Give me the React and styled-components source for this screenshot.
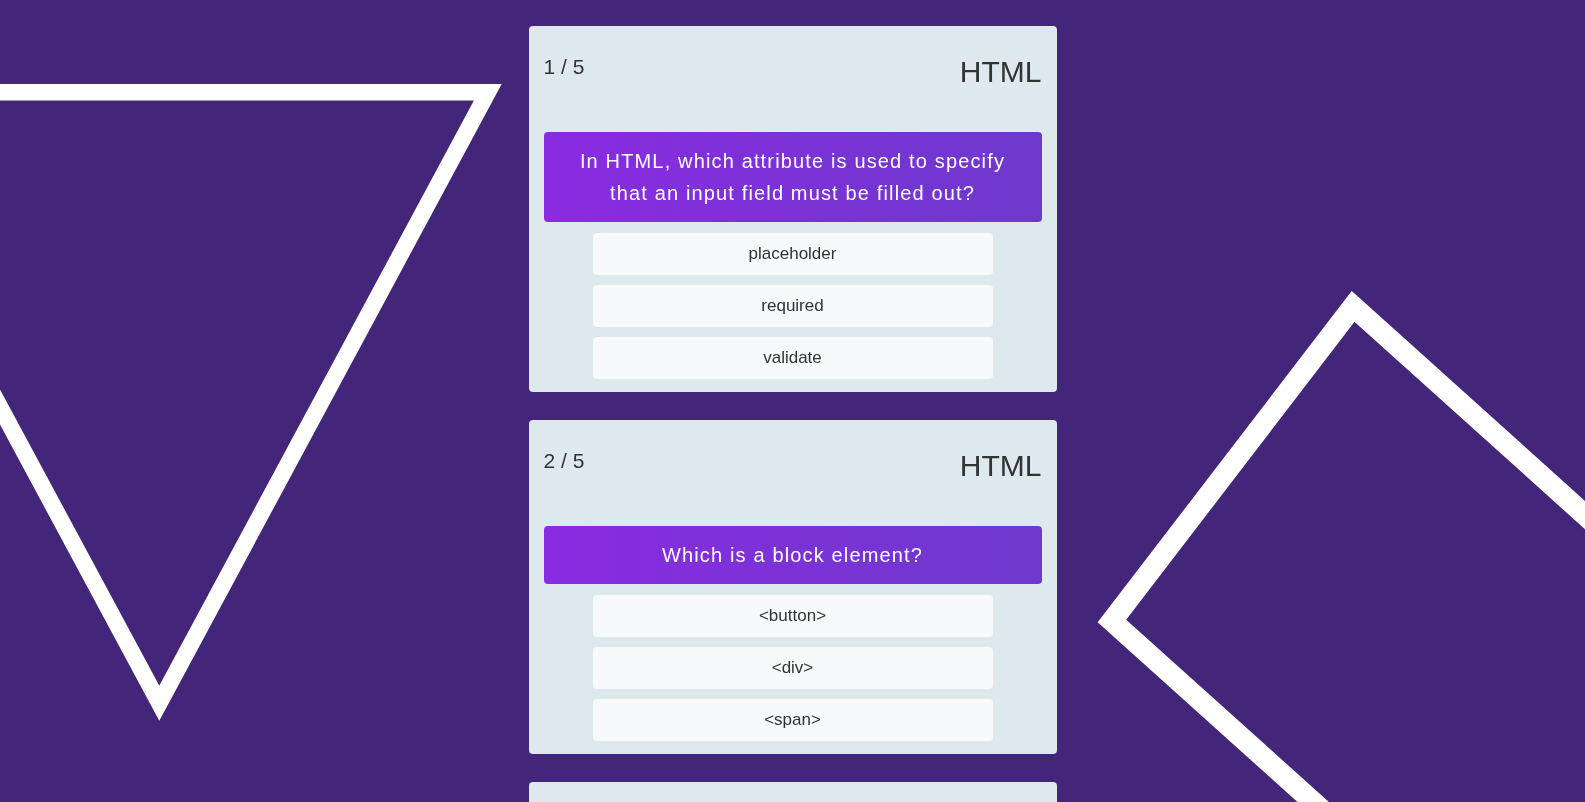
import React from "react";
import styled, { createGlobalStyle } from "styled-components";

const GlobalStyle = createGlobalStyle`
  html {
    scrollbar-width: none;
  }
  html::-webkit-scrollbar {
    display: none;
  }
  body {
    margin: 0;
    background: #43267a;
    font-family: "Liberation Sans", Arial, sans-serif;
    color: #333;
  }
`;

const Backdrop = styled.div`
  position: fixed;
  top: 0;
  left: 0;
  width: 1585px;
  height: 802px;
  overflow: hidden;
  pointer-events: none;
  z-index: 0;
`;

const Quiz = styled.main`
  position: relative;
  z-index: 1;
  display: flex;
  flex-direction: column;
  align-items: center;
  gap: 28px;
  padding: 26px 0 40px;
`;

const Card = styled.section`
  box-sizing: border-box;
  width: 528px;
  padding: 15px 15px 13px;
  background: #dde9ed;
  border-radius: 4px;
`;

const Header = styled.header`
  box-sizing: border-box;
  height: 91px;
  padding-top: 13px;
  display: flex;
  justify-content: space-between;
  align-items: flex-start;
`;

const Counter = styled.span`
  margin-top: 1px;
  font-size: 21px;
  line-height: 24px;
  color: #333;
`;

const Topic = styled.h2`
  margin: 1px 0 0;
  font-size: 30px;
  line-height: 34px;
  font-weight: 400;
  color: #333;
`;

const Question = styled.div`
  padding: 13px 20px;
  border-radius: 4px;
  background: linear-gradient(to right, #8a2be2, #6d39cb);
  color: #fff;
  font-size: 20px;
  line-height: 32px;
  letter-spacing: 1.15px;
  text-align: center;
`;

const Answers = styled.div`
  display: flex;
  flex-direction: column;
  align-items: center;
  gap: 10px;
  margin-top: 11px;
`;

const Answer = styled.button`
  width: 400px;
  height: 42px;
  border: none;
  border-radius: 4px;
  background: #f7f9fa;
  color: #333;
  font-family: inherit;
  font-size: 17px;
  cursor: pointer;
`;

const questions = [
  {
    text: "In HTML, which attribute is used to specify that an input field must be filled out?",
    answers: ["placeholder", "required", "validate"],
  },
  {
    text: "Which is a block element?",
    answers: ["<button>", "<div>", "<span>"],
  },
  {
    text: "Which tag is used to create a hyperlink?",
    answers: ["<link>", "<a>", "<href>"],
  },
  {
    text: "Which element holds the metadata of a page?",
    answers: ["<head>", "<meta>", "<body>"],
  },
  {
    text: "Which tag defines a table row?",
    answers: ["<td>", "<th>", "<tr>"],
  },
];

function Shapes() {
  return (
    <Backdrop>
      <svg width="1585" height="802" viewBox="0 0 1585 802">
        <polygon
          points="-169.2,92.3 487.8,92.3 159.3,703.2"
          fill="none"
          stroke="#fff"
          strokeWidth="16.6"
          strokeLinejoin="miter"
        />
        <polygon
          points="1353.1,306.4 1857.5,760.3 1616.4,1074.6 1111.9,621"
          fill="none"
          stroke="#fff"
          strokeWidth="21"
          strokeLinejoin="miter"
        />
      </svg>
    </Backdrop>
  );
}

export default function App() {
  return (
    <>
      <GlobalStyle />
      <Shapes />
      <Quiz>
        {questions.map((q, i) => (
          <Card key={q.text}>
            <Header>
              <Counter>
                {i + 1} / {questions.length}
              </Counter>
              <Topic>HTML</Topic>
            </Header>
            <Question>{q.text}</Question>
            <Answers>
              {q.answers.map((a) => (
                <Answer key={a}>{a}</Answer>
              ))}
            </Answers>
          </Card>
        ))}
      </Quiz>
    </>
  );
}
